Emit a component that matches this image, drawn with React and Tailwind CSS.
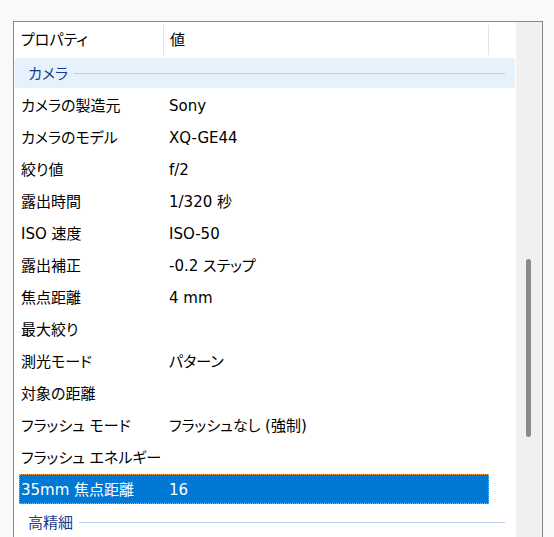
const rows = [
  ["カメラの製造元", "Sony"],
  ["カメラのモデル", "XQ-GE44"],
  ["絞り値", "f/2"],
  ["露出時間", "1/320 秒"],
  ["ISO 速度", "ISO-50"],
  ["露出補正", "-0.2 ステップ"],
  ["焦点距離", "4 mm"],
  ["最大絞り", ""],
  ["測光モード", "パターン"],
  ["対象の距離", ""],
  ["フラッシュ モード", "フラッシュなし (強制)"],
  ["フラッシュ エネルギー", ""],
  ["35mm 焦点距離", "16", true],
];

function Group({ label, shaded }) {
  return (
    <div
      className={`ml-px flex h-[30px] w-[500px] items-center rounded-[2px] pl-[13px] pr-[10px] ${
        shaded ? "bg-[#e5f1fb]" : ""
      }`}
    >
      <span className="pt-[2px] text-[#1c3a8e]">{label}</span>
      <div className="ml-[6px] h-px flex-1 bg-[#b9cfeb]" />
    </div>
  );
}

export default function App() {
  return (
    <div
      className="h-[537px] w-[554px] overflow-hidden bg-[#f9f9f9] pl-[13px] pt-[21px] text-[15px] text-black [font-feature-settings:'palt']"
      style={{ fontFamily: '"DejaVu Sans", "Noto Sans CJK JP", sans-serif' }}
    >
      <div className="flex h-[560px] w-[530px] border border-[#868686] bg-white">
        <div className="w-[502px]">
          <div className="flex h-[35px] items-center">
            <div className="flex h-[30px] w-[150px] items-center border-r border-[#e3e3e3] pl-[7px] pt-[2px]">プロパティ</div>
            <div className="flex h-[30px] w-[325px] items-center border-r border-[#e3e3e3] pl-[6px] pt-[2px]">値</div>
          </div>
          <div className="mt-px">
            <Group label="カメラ" shaded />
          </div>
          <div className="mt-px">
            {rows.map(([name, value, selected]) => (
              <div key={name} className="flex h-[32px] items-center">
                <div
                  className={`ml-[5px] flex h-[30px] w-[470px] items-center whitespace-nowrap pt-[2px] ${
                    selected ? "border border-dotted border-[#f4a23c] bg-[#0078d4] text-white" : "border border-transparent"
                  }`}
                >
                  <span className="w-[149px] shrink-0 pl-px">{name}</span>
                  <span>{value}</span>
                </div>
              </div>
            ))}
          </div>
          <div className="mt-[2px]">
            <Group label="高精細" />
          </div>
        </div>
        <div className="flex-1 bg-[#f0f0f0] pl-[10px] pt-[237px]">
          <div className="h-[178px] w-[5px] rounded-full bg-[#8a8a8a]" />
        </div>
      </div>
    </div>
  );
}
